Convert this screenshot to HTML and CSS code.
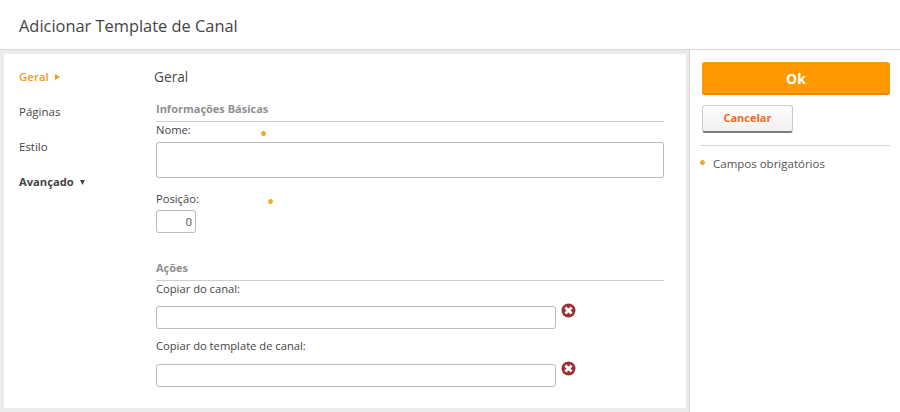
FILE: index.html
```html
<!DOCTYPE html>
<html lang="pt">
<head>
<meta charset="utf-8">
<title>Adicionar Template de Canal</title>
<link rel="stylesheet" href="styles.css">
</head>
<body>
<header class="top"><h1>Adicionar Template de Canal</h1></header>
<div class="main">
  <div class="canvas">
    <div class="panel">
      <nav class="nav">
        <a class="nav-item active">Geral <svg class="tri" width="5" height="6" viewBox="0 0 5 6"><path d="M0 0l5 3-5 3z"/></svg></a>
        <a class="nav-item">Páginas</a>
        <a class="nav-item">Estilo</a>
        <a class="nav-item strong">Avançado <svg class="tri" width="5" height="5" viewBox="0 0 5 5"><path d="M0 0h5L2.500 5z"/></svg></a>
      </nav>
      <form class="form">
        <h2>Geral</h2>
        <h3>Informações Básicas</h3>
        <div class="label name-label">Nome:<svg class="req req-name" width="5" height="5" viewBox="0 0 5 5"><path d="M2.500 0v5M0 2.500h5M.8.8l3.400 3.400M4.200.8L.8 4.200"/></svg></div>
        <input class="field tall" type="text">
        <div class="label pos-label">Posição:<svg class="req req-pos" width="5" height="5" viewBox="0 0 5 5"><path d="M2.500 0v5M0 2.500h5M.8.8l3.400 3.400M4.200.8L.8 4.200"/></svg></div>
        <input class="field num" type="text" value="0">
        <h3 class="actions">Ações</h3>
        <div class="label">Copiar do canal:</div>
        <div class="picker">
          <input class="field wide" type="text">
          <svg class="del" width="15" height="15" viewBox="0 0 15 15"><circle cx="7.500" cy="7.500" r="7" fill="#9c2f2f"/><path d="M4.400 4.400l6.200 6.200M10.600 4.400l-6.200 6.200" stroke="#fff" stroke-width="2.800"/></svg>
        </div>
        <div class="label second">Copiar do template de canal:</div>
        <div class="picker next">
          <input class="field wide" type="text">
          <svg class="del" width="15" height="15" viewBox="0 0 15 15"><circle cx="7.500" cy="7.500" r="7" fill="#9c2f2f"/><path d="M4.400 4.400l6.200 6.200M10.600 4.400l-6.200 6.200" stroke="#fff" stroke-width="2.800"/></svg>
        </div>
      </form>
    </div>
  </div>
  <aside class="side">
    <button class="btn ok" type="button">Ok</button>
    <button class="btn cancel" type="button">Cancelar</button>
    <div class="note"><svg class="req note-req" width="5" height="5" viewBox="0 0 5 5"><path d="M2.500 0v5M0 2.500h5M.8.8l3.400 3.400M4.200.8L.8 4.200"/></svg>Campos obrigatórios</div>
  </aside>
</div>
</body>
</html>
```
FILE: styles.css
```css
* { box-sizing: border-box; }
html, body { margin: 0; height: 100%; }
body {
  width: 900px; height: 412px; overflow: hidden; background: #fff;
  font-family: "Open Sans", "Noto Sans", sans-serif; color: #444;
}
.top { height: 50px; padding: 15px 19px 0; border-bottom: 1px solid #d6d6d6; }
h1 { margin: 0; font-size: 16.400px; line-height: 22px; font-weight: 400; color: #444; }
.main { display: flex; height: 362px; }
.canvas { width: 689px; height: 362px; background: #ebebeb; padding: 4px 3px 4px 4px; }
.panel { background: #fff; height: 354px; display: flex; }
.nav { width: 152px; padding: 14px 0 0 15px; display: flex; flex-direction: column; gap: 17px; }
.nav-item { font-size: 11.500px; line-height: 18px; color: #444; }
.nav-item.active { color: #f39a1f; font-weight: 600; }
.nav-item.strong { font-size: 11.200px; font-weight: 700; }
.tri { fill: currentColor; margin-left: 3px; vertical-align: 1px; }
.form { width: 508px; }
h2 { margin: 13px 0 0 -2px; font-size: 13.700px; line-height: 20px; font-weight: 400; color: #4a4a4a; }
h3 { margin: 13px 0 0; height: 22px; font-size: 11px; line-height: 18px; font-weight: 700; color: #8f8f8f; border-bottom: 1px solid #cfcfcf; }
h3.actions { margin-top: 26px; }
.label { font-size: 11.200px; line-height: 16px; color: #444; position: relative; }
.name-label { height: 20px; }
.pos-label { margin-top: 13px; height: 19px; }
.req { fill: none; stroke: #f0a830; stroke-width: 1.500; }
.req-name { position: absolute; left: 105px; top: 9px; }
.req-pos { position: absolute; left: 112px; top: 8px; }
.field { display: block; border: 1px solid #bbb; border-radius: 3px; background: #fff; padding: 0 6px; font: 11.500px "Open Sans", sans-serif; color: #555; outline: 0; }
.tall { width: 508px; height: 36px; }
.num { width: 40px; height: 23px; text-align: right; padding-right: 3px; }
.wide { width: 400px; height: 23px; }
.picker { display: flex; align-items: flex-start; gap: 5px; margin-top: 9px; }
.picker.next { margin-top: 10px; }
.del { margin-top: -3px; }
.second { margin-top: 9px; }
.side { width: 211px; border-left: 1px solid #d6d6d6; padding: 12px 10px 0 12px; display: flex; flex-direction: column; align-items: flex-start; }
.btn { display: block; font-family: inherit; font-weight: 700; cursor: pointer; }
.ok { width: 188px; height: 33px; padding: 1px 0 0; border: 0; border-bottom: 2px solid #ff7f00; border-radius: 3px; background: #ff9900; color: #fff; font-size: 14px; }
.cancel { width: 91px; height: 28px; margin-top: 10px; padding: 0 0 2px; border: 1px solid #ccc; border-bottom: 2px solid #7d7d7d; border-radius: 3px; background: linear-gradient(#fff, #f0f0f0); color: #f26a1b; font-size: 11px; }
.note { align-self: stretch; margin: 12px 0 0 -2px; padding-top: 9px; border-top: 1px solid #d6d6d6; font-size: 11.500px; line-height: 18px; color: #555; display: flex; align-items: center; }
.note-req { margin-right: 8px; margin-top: -3px; }
```
